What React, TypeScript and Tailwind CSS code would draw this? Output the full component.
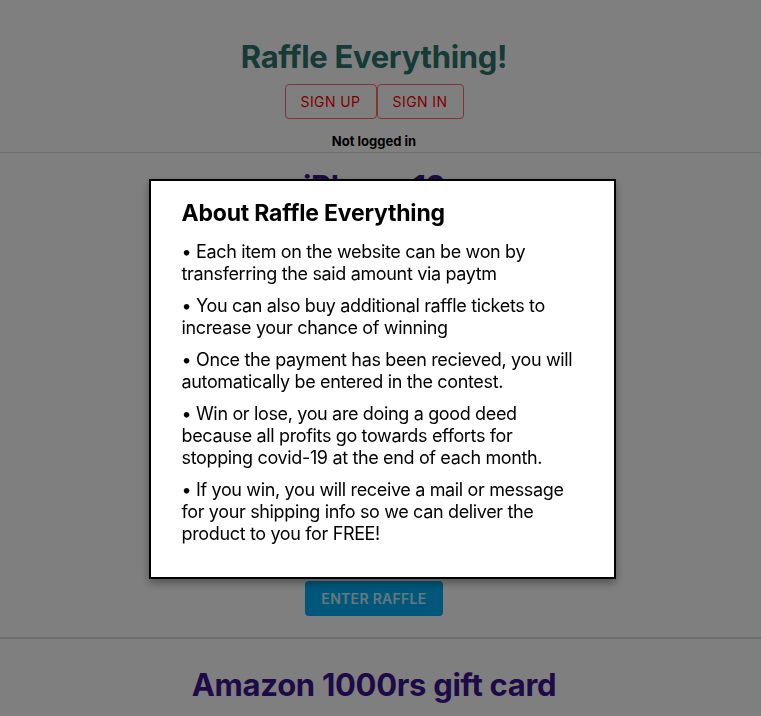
import { useState } from 'react';

const rules = [
  '• Each item on the website can be won by transferring the said amount via paytm',
  '• You can also buy additional raffle tickets to increase your chance of winning',
  '• Once the payment has been recieved, you will automatically be entered in the contest.',
  '• Win or lose, you are doing a good deed because all profits go towards efforts for stopping covid-19 at the end of each month.',
  '• If you win, you will receive a mail or message for your shipping info so we can deliver the product to you for FREE!',
];

const items = [
  { name: 'iPhone 12', price: 1000 },
  { name: 'Amazon 1000rs gift card', price: 10 },
];

export default function App() {
  const [showAbout, setShowAbout] = useState(true);

  return (
    <div className="relative min-h-screen bg-white font-['Inter',sans-serif] text-black">
      {/* content is centred as if a scrollbar took the right edge */}
      <header className="flex flex-col items-center pt-[39px] pr-[13px]">
        <h1 className="text-[31px] leading-[36px] font-bold text-[#2c746c] tracking-[-0.3px]">Raffle Everything!</h1>
        <div className="mt-[9px] flex">
          <button className="h-[35px] w-[92px] rounded-[4px] border border-[#ff6b6b] text-[14px] tracking-[0.4px] text-[#ff0000]">
            SIGN UP
          </button>
          <button className="h-[35px] w-[87px] rounded-[4px] border border-[#ff6b6b] text-[14px] tracking-[0.4px] text-[#ff0000]">
            SIGN IN
          </button>
        </div>
        <p className="mt-[14px] text-[13px] leading-[16px] font-bold">Not logged in</p>
      </header>

      <div className="mt-[3px]">
        {items.map((item, i) => (
          <section key={item.name} className={i === 0 ? 'border-t border-[#dcdcdc]' : 'border-t-2 border-[#dcdcdc]'}>
            <div className={`flex flex-col items-center pr-[13px] ${i === 0 ? 'pt-[14px]' : 'pt-[26px]'} pb-[21px]`}>
              <h2 className="text-[31px] leading-[40px] font-bold text-[#3a148e] tracking-[-0.3px]">{item.name}</h2>
              <div className="h-[374px] w-[300px]" />
              <button className="h-[35px] w-[138px] rounded-[4px] bg-[#00aef5] text-[14px] font-semibold tracking-[0.3px] text-white/80">
                ENTER RAFFLE
              </button>
            </div>
          </section>
        ))}
      </div>

      {showAbout && (
        <div className="fixed inset-0 flex justify-center bg-black/50 pt-[179px]" onClick={() => setShowAbout(false)}>
          <div
            className="ml-[3px] h-[400px] w-[467px] border-2 border-black bg-white px-[31px] pt-[18px] shadow-[0_4px_8px_rgba(0,0,0,0.35)]"
            onClick={(e) => e.stopPropagation()}
          >
            <h2 className="text-[23px] leading-[28px] font-bold tracking-[-0.2px]">About Raffle Everything</h2>
            <div className="mt-[14px] flex flex-col gap-[10px]">
              {rules.map((r) => (
                <p key={r} className="text-[18px] leading-[22px] tracking-[-0.35px]">
                  {r}
                </p>
              ))}
            </div>
          </div>
        </div>
      )}
    </div>
  );
}
